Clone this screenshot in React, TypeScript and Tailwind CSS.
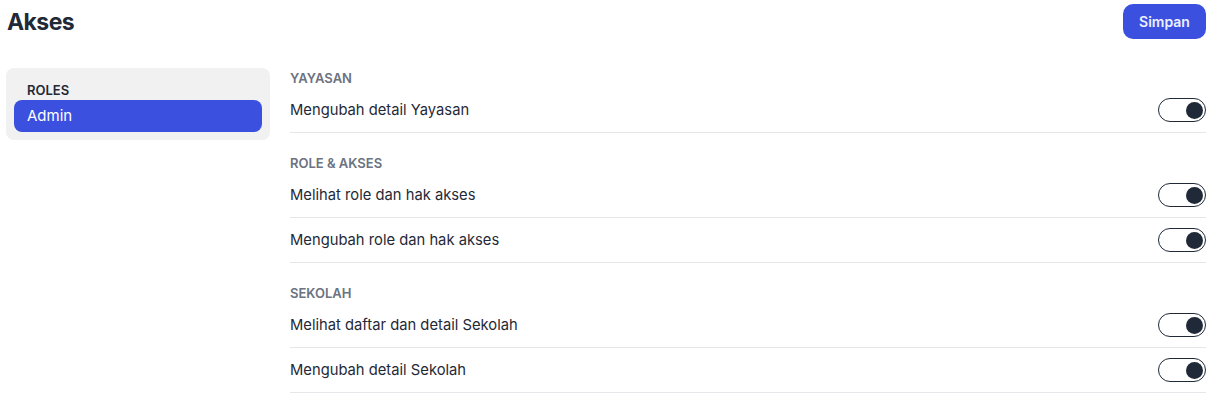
import { useState } from "react";

type Perm = { label: string; on: boolean };
type Section = { title: string; items: Perm[] };

const initial: Section[] = [
  { title: "YAYASAN", items: [{ label: "Mengubah detail Yayasan", on: true }] },
  {
    title: "ROLE & AKSES",
    items: [
      { label: "Melihat role dan hak akses", on: true },
      { label: "Mengubah role dan hak akses", on: true },
    ],
  },
  {
    title: "SEKOLAH",
    items: [
      { label: "Melihat daftar dan detail Sekolah", on: true },
      { label: "Mengubah detail Sekolah", on: true },
    ],
  },
];

function Toggle({ on, onClick }: { on: boolean; onClick: () => void }) {
  return (
    <button
      type="button"
      onClick={onClick}
      className={`w-12 h-6 rounded-full border-[1.5px] border-[#1f2937] bg-white flex items-center px-[2.5px] ${on ? "justify-end" : "justify-start"}`}
    >
      <span className="block w-[17px] h-[17px] rounded-full bg-[#1f2937]" />
    </button>
  );
}

export default function App() {
  const [sections, setSections] = useState(initial);

  const flip = (s: number, i: number) =>
    setSections((prev) =>
      prev.map((sec, si) =>
        si !== s ? sec : { ...sec, items: sec.items.map((it, ii) => (ii !== i ? it : { ...it, on: !it.on })) }
      )
    );

  return (
    <div className="min-h-[408px] bg-white pl-[6px] pr-[17px] pt-1 font-['Inter',sans-serif] text-[#1f2937]">
      <header className="flex items-center justify-between h-[35px]">
        <h1 className="pl-px pt-px text-[23px] font-bold tracking-[-0.025em]">Akses</h1>
        <button className="h-[35px] w-[83px] rounded-[10px] bg-[#3c50e0] text-[14px] font-semibold text-[#eef0ff]">
          Simpan
        </button>
      </header>

      <div className="mt-[29px] flex gap-5">
        <aside className="w-[264px] shrink-0 self-start rounded-lg bg-[#f1f1f1] px-2 pt-[12px] pb-2">
          <div className="px-[13px] text-[13px] font-semibold leading-5">ROLES</div>
          <div className="h-8 rounded-lg bg-[#3c50e0] px-[13px] flex items-center text-[15px] text-white">Admin</div>
        </aside>

        <main className="flex-1 flex flex-col gap-5">
          {sections.map((sec, s) => (
            <section key={sec.title}>
              <h2 className="h-[19px] pt-px text-[13px] font-semibold leading-[19px] text-[#6b7280]">{sec.title}</h2>
              {sec.items.map((it, i) => (
                <div
                  key={it.label}
                  className={`border-b border-[#e5e7eb] flex items-center justify-between ${i === 0 ? "h-[46px] pt-px" : "h-[45px]"}`}
                >
                  <span className="text-[14.75px]">{it.label}</span>
                  <Toggle on={it.on} onClick={() => flip(s, i)} />
                </div>
              ))}
            </section>
          ))}
        </main>
      </div>
    </div>
  );
}
